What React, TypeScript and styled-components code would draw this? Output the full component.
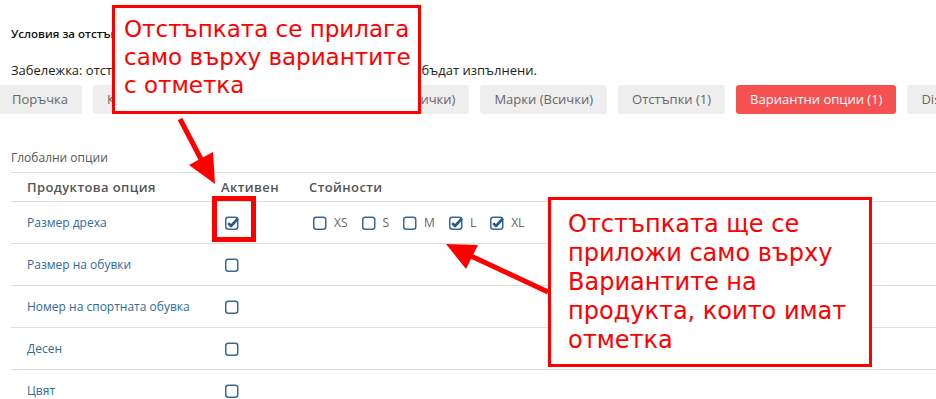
import React from "react";
import styled, { createGlobalStyle } from "styled-components";

const GlobalStyle = createGlobalStyle`
  html, body {
    margin: 0;
    padding: 0;
    background: #fff;
  }
  body {
    font-family: "Open Sans", "Liberation Sans", sans-serif;
    color: #222;
    overflow: hidden;
  }
  * {
    box-sizing: border-box;
  }
`;

const Page = styled.div`
  position: relative;
  width: 936px;
  height: 399px;
  overflow: hidden;
`;

const Header = styled.div`
  padding: 26px 11px 0;
`;

const Title = styled.div`
  font-size: 11.5px;
  font-weight: 600;
  line-height: 16px;
  color: #111;
`;

const Note = styled.div`
  margin-top: 19px;
  font-size: 13px;
  line-height: 18px;
  color: #222;
  white-space: nowrap;
`;

const TabBar = styled.div`
  display: flex;
  gap: 11px;
  margin: 6px 0 0 -2px;
  white-space: nowrap;
`;

const Tab = styled.div<{ $active?: boolean }>`
  flex: none;
  height: 29px;
  line-height: 29px;
  padding: 0 14px;
  border-radius: 3px;
  font-size: 13px;
  background: ${(p) => (p.$active ? "#f65151" : "#eeeeee")};
  color: ${(p) => (p.$active ? "#fff" : "#666")};
`;

const SectionLabel = styled.div`
  margin: 36px 11px 0;
  font-size: 12px;
  line-height: 16px;
  color: #555;
`;

const Table = styled.div`
  margin: 6px 0 0 11px;
  border-top: 1px solid #dddddd;
`;

const Row = styled.div<{ $head?: boolean }>`
  display: grid;
  grid-template-columns: 210px 88px 1fr;
  align-items: center;
  height: ${(p) => (p.$head ? 29 : 42)}px;
  border-bottom: 1px solid #dddddd;
`;

const HeadCell = styled.div<{ $first?: boolean }>`
  padding-left: ${(p) => (p.$first ? 16 : 0)}px;
  font-size: 13px;
  font-weight: 600;
  letter-spacing: 0.4px;
  color: #555;
`;

const OptionName = styled.div`
  padding-left: 16px;
  font-size: 12px;
  color: #2f6a9c;
`;

const CheckCell = styled.div`
  display: flex;
  align-items: center;
  padding-left: 4px;
`;

const Values = styled.div`
  display: flex;
  align-items: center;
  gap: 14px;
  padding-left: 4px;
`;

const Value = styled.label`
  display: flex;
  align-items: center;
  gap: 6px;
  font-size: 12px;
  color: #666;
`;

const Callout = styled.div`
  position: absolute;
  background: #fff;
  border: 3px solid #ff0000;
  color: #ff0000;
  font-family: "DejaVu Sans", sans-serif;
  white-space: nowrap;
  z-index: 2;
`;

const TopCallout = styled(Callout)`
  left: 112px;
  top: 5px;
  width: 309px;
  height: 109px;
  padding: 7px 9px;
  font-size: 23px;
  line-height: 28px;
`;

const SideCallout = styled(Callout)`
  left: 548px;
  top: 197px;
  width: 324px;
  height: 170px;
  padding: 10px 17px;
  font-size: 24px;
  line-height: 29px;
`;

const Highlight = styled.div`
  position: absolute;
  left: 212px;
  top: 196px;
  width: 44px;
  height: 46px;
  border: 5px solid #ff0000;
  z-index: 2;
`;

const Arrows = styled.svg`
  position: absolute;
  left: 0;
  top: 0;
  pointer-events: none;
  z-index: 3;
`;

const Checkbox = ({ checked }: { checked?: boolean }) => (
  <svg width="15" height="14" viewBox="0 0 15 14">
    <rect
      x="0.75"
      y="1.25"
      width="12"
      height="12"
      rx="2.5"
      fill="#fff"
      stroke="#3a6894"
      strokeWidth="1.5"
    />
    {checked && (
      <path
        d="M3.2 7.2 L6 10 L12.8 2.6"
        stroke="#24588a"
        strokeWidth="2.6"
        fill="none"
        strokeLinejoin="round"
      />
    )}
  </svg>
);

const tabs = [
  "Поръчка",
  "Категориите (Всички)",
  "Продукти и услуги (Всички)",
  "Марки (Всички)",
  "Отстъпки (1)",
  "Вариантни опции (1)",
  "Discount codes",
];

const options = [
  "Размер дреха",
  "Размер на обувки",
  "Номер на спортната обувка",
  "Десен",
  "Цвят",
];

const sizes = [
  { label: "XS", checked: false },
  { label: "S", checked: false },
  { label: "M", checked: false },
  { label: "L", checked: true },
  { label: "XL", checked: true },
];

export default function App() {
  return (
    <Page>
      <GlobalStyle />
      <Header>
        <Title>Условия за отстъпката</Title>
        <Note>
          Забележка: отстъпката ще се приложи само ако всички условия бъдат
          изпълнени.
        </Note>
      </Header>
      <TabBar>
        {tabs.map((t) => (
          <Tab key={t} $active={t === "Вариантни опции (1)"}>
            {t}
          </Tab>
        ))}
      </TabBar>
      <SectionLabel>Глобални опции</SectionLabel>
      <Table>
        <Row $head>
          <HeadCell $first>Продуктова опция</HeadCell>
          <HeadCell>Активен</HeadCell>
          <HeadCell>Стойности</HeadCell>
        </Row>
        {options.map((o, i) => (
          <Row key={o}>
            <OptionName>{o}</OptionName>
            <CheckCell>
              <Checkbox checked={i === 0} />
            </CheckCell>
            {i === 0 ? (
              <Values>
                {sizes.map((s) => (
                  <Value key={s.label}>
                    <Checkbox checked={s.checked} />
                    {s.label}
                  </Value>
                ))}
              </Values>
            ) : (
              <div />
            )}
          </Row>
        ))}
      </Table>

      <TopCallout>
        Отстъпката се прилага
        <br />
        само върху вариантите
        <br />с отметка
      </TopCallout>
      <Highlight />
      <SideCallout>
        Отстъпката ще се
        <br />
        приложи само върху
        <br />
        Вариантите на
        <br />
        продукта, които имат
        <br />
        отметка
      </SideCallout>

      <Arrows width="936" height="399" viewBox="0 0 936 399">
        <line x1="180" y1="119" x2="202" y2="161" stroke="#ff0000" strokeWidth="5" />
        <polygon points="189,165 213,152 215,184" fill="#ff0000" />
        <line x1="548" y1="292" x2="471" y2="256" stroke="#ff0000" strokeWidth="5" />
        <polygon points="446,244 478,245 466,269" fill="#ff0000" />
      </Arrows>
    </Page>
  );
}
